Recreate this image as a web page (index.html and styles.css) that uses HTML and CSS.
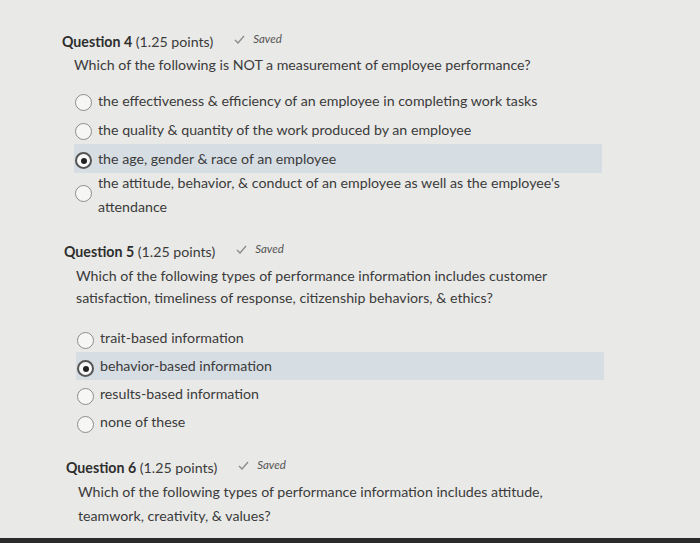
FILE: index.html
```html
<!DOCTYPE html>
<html lang="en">
<head>
    <meta charset="UTF-8">
    <meta name="viewport" content="width=device-width, initial-scale=1.0">
    <title>Quiz</title>
    <link rel="stylesheet" href="styles.css">
</head>
<body>
    <div class="quiz">
        <div class="question q4">
            <div class="q-head">
                <span class="q-title"><strong>Question 4</strong> (1.25 points)</span>
                <span class="saved"><svg width="11" height="9" viewBox="0 0 11 9"><path d="M1 5 L4 8 L10 1" fill="none" stroke="#8a8a8a" stroke-width="1.3"/></svg>Saved</span>
            </div>
            <div class="q-body">
                <p class="stem">Which of the following is NOT a measurement of employee performance?</p>
                <ul class="options">
                    <li class="option"><span class="radio"></span><span class="label">the effectiveness &amp; efficiency of an employee in completing work tasks</span></li>
                    <li class="option"><span class="radio"></span><span class="label">the quality &amp; quantity of the work produced by an employee</span></li>
                    <li class="option selected"><span class="radio"></span><span class="label">the age, gender &amp; race of an employee</span></li>
                    <li class="option"><span class="radio"></span><span class="label">the attitude, behavior, &amp; conduct of an employee as well as the employee's attendance</span></li>
                </ul>
            </div>
        </div>

        <div class="question q5">
            <div class="q-head">
                <span class="q-title"><strong>Question 5</strong> (1.25 points)</span>
                <span class="saved"><svg width="11" height="9" viewBox="0 0 11 9"><path d="M1 5 L4 8 L10 1" fill="none" stroke="#8a8a8a" stroke-width="1.3"/></svg>Saved</span>
            </div>
            <div class="q-body">
                <p class="stem">Which of the following types of performance information includes customer satisfaction, timeliness of response, citizenship behaviors, &amp; ethics?</p>
                <ul class="options">
                    <li class="option"><span class="radio"></span><span class="label">trait-based information</span></li>
                    <li class="option selected"><span class="radio"></span><span class="label">behavior-based information</span></li>
                    <li class="option"><span class="radio"></span><span class="label">results-based information</span></li>
                    <li class="option"><span class="radio"></span><span class="label">none of these</span></li>
                </ul>
            </div>
        </div>

        <div class="question q6">
            <div class="q-head">
                <span class="q-title"><strong>Question 6</strong> (1.25 points)</span>
                <span class="saved"><svg width="11" height="9" viewBox="0 0 11 9"><path d="M1 5 L4 8 L10 1" fill="none" stroke="#8a8a8a" stroke-width="1.3"/></svg>Saved</span>
            </div>
            <div class="q-body">
                <p class="stem">Which of the following types of performance information includes attitude, teamwork, creativity, &amp; values?</p>
            </div>
        </div>
    </div>
    <div class="bottom-edge"></div>
</body>
</html>
```

FILE: styles.css
```css
html, body {
    margin: 0;
    height: 543px;
    overflow: hidden;
}
body {
    background-color: #e9e9e7;
    font-family: Lato, "Open Sans", sans-serif;
    font-size: 14.2px;
    color: #3b3b3b;
}
.quiz {
    padding: 32px 0 0 62px;
    height: 506px;
}
.q-head {
    display: flex;
    align-items: center;
    height: 20px;
    line-height: 20px;
}
.q-title strong {
    font-weight: 700;
    color: #2e2e2e;
}
.saved {
    display: flex;
    align-items: center;
    gap: 8px;
    margin-left: 21px;
    font-size: 11.5px;
    font-style: italic;
    color: #555;
    position: relative;
    top: -3px;
}
.q-body {
    padding-left: 12px;
}
.stem {
    margin: 3px 0 0;
    line-height: 20px;
    width: 490px;
}
.options {
    list-style: none;
    margin: 11px 0 0;
    padding: 0;
    width: 528px;
}
.option {
    display: flex;
    align-items: flex-start;
    padding: 2px 0 2px 1px;
    line-height: 25px;
}
.option .label {
    margin-left: 6px;
    width: 490px;
}
.radio {
    flex: none;
    box-sizing: border-box;
    width: 17px;
    height: 17px;
    margin-top: 6px;
    border: 1px solid #8c8c8c;
    border-radius: 50%;
    background-color: #f6f6f5;
    position: relative;
}
.q4 .option:last-child {
    margin-top: -4px;
    line-height: 24px;
}
.q4 .option:last-child .radio {
    margin-top: 14px;
}
.selected {
    background-color: #d6dde3;
}
.selected .radio {
    border: 2px solid #555;
    background-color: #fafafa;
}
.selected .radio::after {
    content: "";
    position: absolute;
    left: 3.5px;
    top: 3.5px;
    width: 6px;
    height: 6px;
    border-radius: 50%;
    background-color: #222;
}
.q5 {
    margin-top: 21px;
    padding-left: 2px;
}
.q5 .stem {
    line-height: 22px;
}
.q5 .options {
    margin-top: 15px;
}
.q5 .option {
    line-height: 24px;
}
.q6 {
    margin-top: 22px;
    padding-left: 4px;
}
.q6 .stem {
    margin-top: 2px;
    line-height: 24px;
}
.bottom-edge {
    height: 5px;
    background-color: #2b2b2b;
}
```
